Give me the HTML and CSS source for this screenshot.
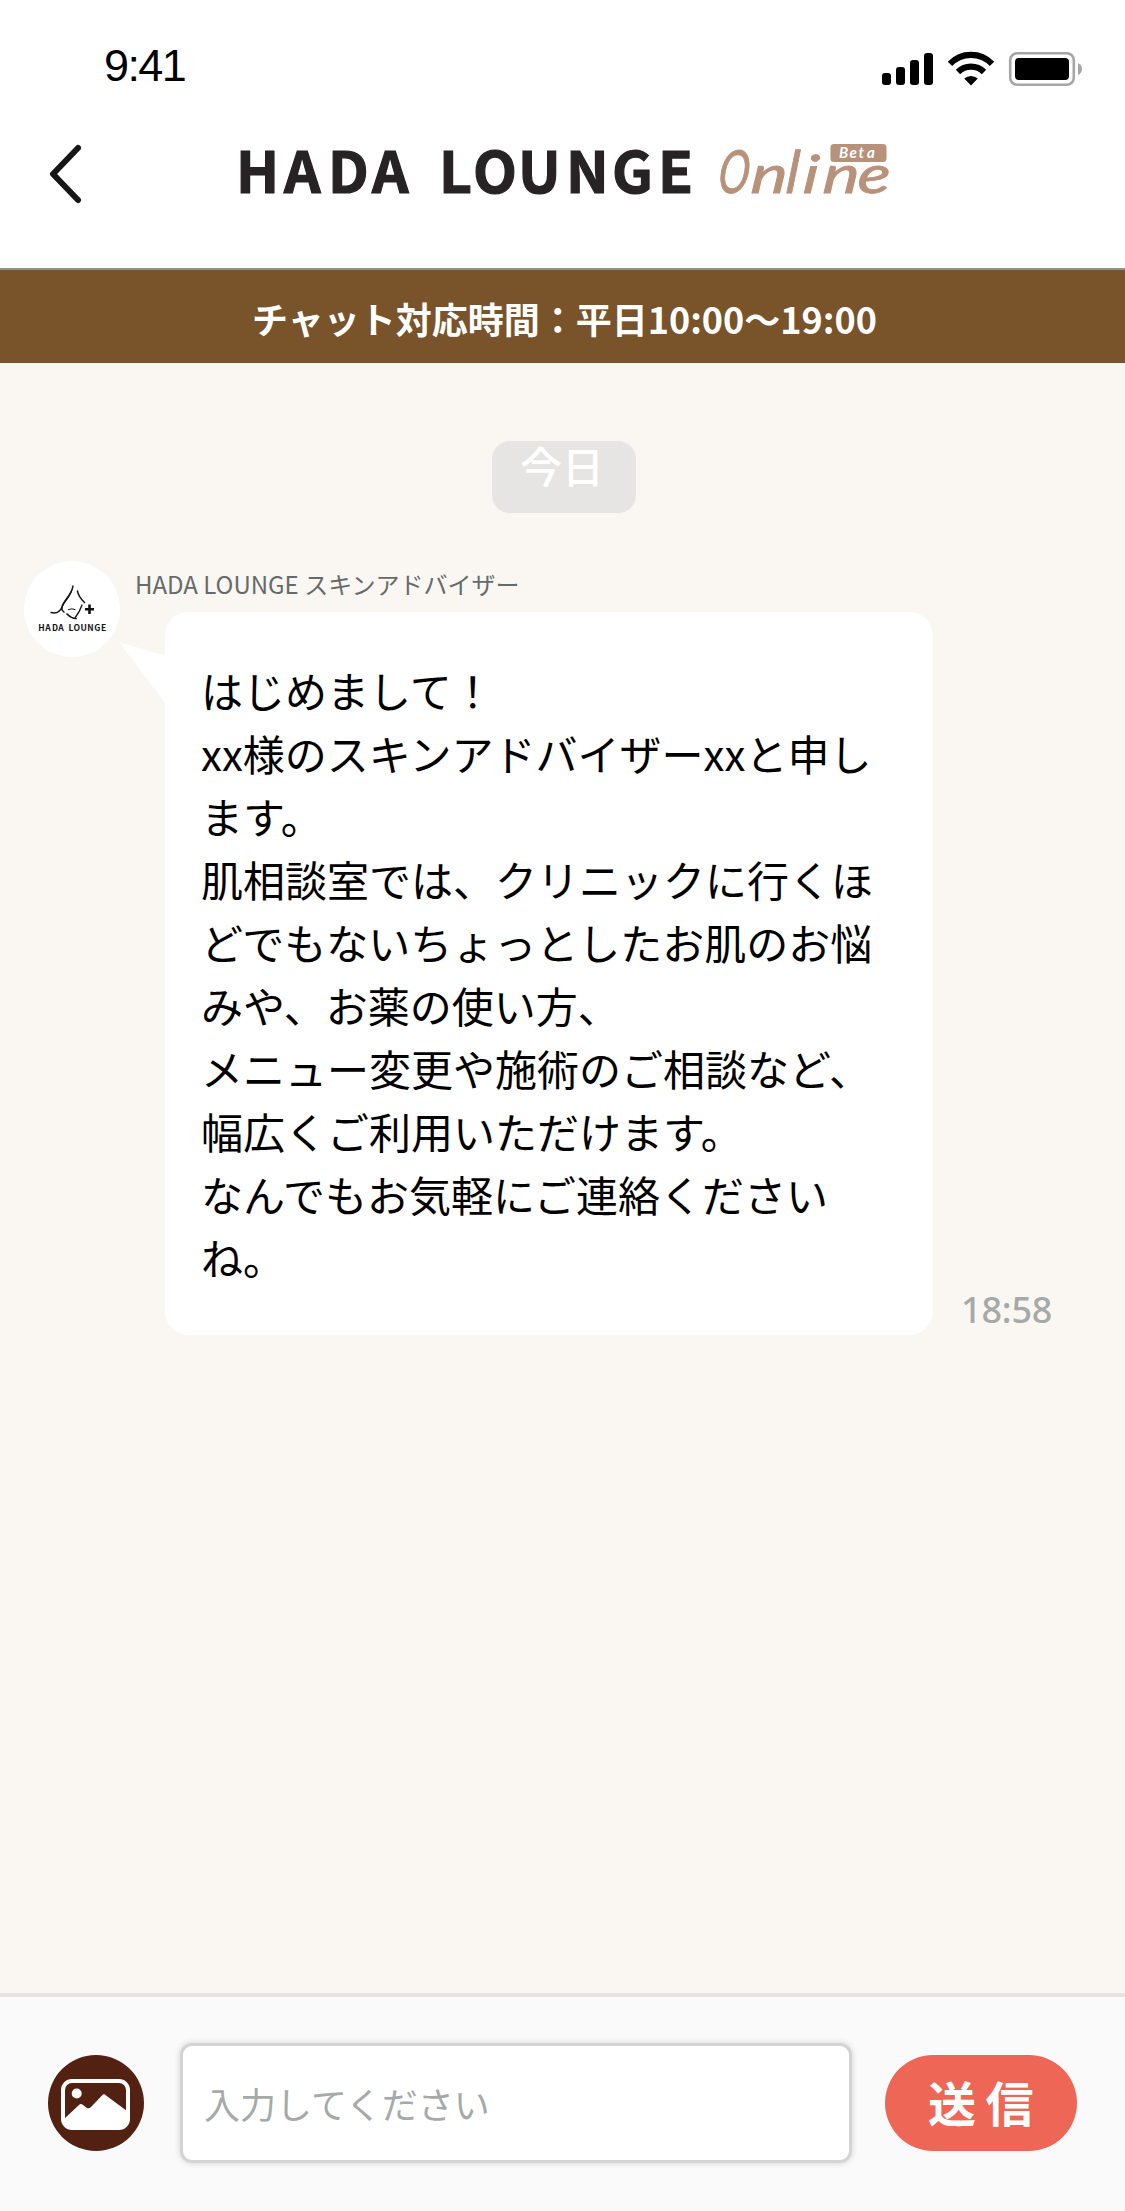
FILE: index.html
```html
<!DOCTYPE html>
<html lang="ja">
<head>
<meta charset="utf-8">
<title>HADA LOUNGE Online</title>
<link rel="stylesheet" href="styles.css">
</head>
<body>
<div class="app">
  <header class="header">
    <div class="status">
      <span class="clock">9:41</span>
      <svg class="status-icons" width="202" height="36" viewBox="0 0 202 36">
        <rect x="2" y="22" width="9" height="12" rx="3"/>
        <rect x="16" y="16" width="9" height="18" rx="3"/>
        <rect x="30" y="9" width="9" height="25" rx="3"/>
        <rect x="44" y="2" width="9" height="32" rx="3"/>
        <g fill="none" stroke="#000" stroke-width="6.2">
          <path d="M70 12.8A29 29 0 0 1 112 12.8"/>
          <path d="M78 21A18.5 18.5 0 0 1 104 21"/>
        </g>
        <path d="M84.2 27.5A10.5 10.5 0 0 1 97.8 27.5L91 34.5Z"/>
        <rect x="130.200" y="2.200" width="63.600" height="31.600" rx="7" fill="none" stroke="#a6a6a6" stroke-width="2.6"/>
        <rect x="135" y="7" width="54" height="22" rx="4"/>
        <path d="M198 12Q202 14 202 18T198 24Z" fill="#a6a6a6"/>
      </svg>
    </div>
    <div class="nav">
      <svg class="back" width="34" height="60" viewBox="0 0 34 60"><path d="M30 4L5 30L30 56" fill="none" stroke="#161617" stroke-width="6" stroke-linecap="round" stroke-linejoin="round"/></svg>
      <svg class="logo" width="660" height="60" viewBox="0 0 660 60">
        <text class="logo-name" y="52.600" x="0 48 92 136 177 203 237 282 330 376 422">HADA LOUNGE</text>
        <g class="logo-online">
          <text transform="translate(481 53) skewX(-6) scale(.74 1.06)">O</text>
          <text transform="translate(514 53) skewX(-5) scale(1.22 .94)">n</text>
          <text transform="translate(549 53) skewX(-5) scale(1 1.05)">l</text>
          <text transform="translate(566 53) skewX(-5) scale(1.2 .94)">i</text>
          <text transform="translate(586 53) skewX(-5) scale(1.22 .94)">n</text>
          <text transform="translate(621 53) skewX(-3) scale(1.22 .94)">e</text>
        </g>
        <rect x="594.500" y="4" width="56" height="18" rx="3.500" fill="#b8917a"/>
        <text class="logo-beta" y="18" x="603 613.500 622.500 631">Beta</text>
      </svg>
    </div>
  </header>
  <div class="banner">チャット対応時間：平日10:00〜19:00</div>
  <main class="chat">
    <div class="date">今日</div>
    <div class="message">
      <div class="avatar">
        <svg width="96" height="96" viewBox="0 0 96 96">
          <g fill="none" stroke="#111" stroke-linecap="round">
            <path d="M49 25C47 36 40 40 38 46C36 51 33 53 27 51.500" stroke-width="1.4"/>
            <path d="M47 31C43 38 39 41 38 46Q37 49 40 51" stroke-width="1.5"/>
            <path d="M53.500 30C54 35 57 38 60.500 41.500" stroke-width="1.5"/>
            <path d="M58 44C56 50 54 53 51 57" stroke-width="1.3"/>
            <path d="M52 57.500C48 57.500 45 55 43 53" stroke-width="1.7"/>
            <path d="M44.500 48.500Q48 47 51 48.500" stroke-width="1"/>
          </g>
          <path d="M65.500 43.500V53M61 48.200H70" stroke="#111" stroke-width="2.600"/>
          <text class="avatar-name" y="70.300" x="14.200 21.200 28 34.200 41 44.500 49.600 56.400 63.200 70.200 77">HADA LOUNGE</text>
        </svg>
      </div>
      <div class="body">
        <div class="name">HADA LOUNGE スキンアドバイザー</div>
        <div class="row">
          <div class="bubble">
            <svg class="tail" width="47" height="62" viewBox="0 0 47 62"><path d="M0 0L47 14V62Z" fill="#fff"/></svg>
            はじめまして！<br>xx様のスキンアドバイザーxxと申します。<br>肌相談室では、クリニックに行くほどでもないちょっとしたお肌のお悩みや、お薬の使い方、<br>メニュー変更や施術のご相談など、幅広くご利用いただけます。<br>なんでもお気軽にご連絡くださいね。
          </div>
          <time class="time">18:58</time>
        </div>
      </div>
    </div>
  </main>
  <footer class="composer">
    <button class="photo" aria-label="画像">
      <svg width="96" height="96" viewBox="0 0 96 96">
        <rect x="15" y="26" width="65" height="47" rx="9" fill="none" stroke="#fff" stroke-width="4"/>
        <circle cx="28.700" cy="38.500" r="5" fill="#fff"/>
        <path d="M16 64L31 50Q33 48 35 50L39 53Q41 54 43 52L54 40.500Q56 38 58 40.500L79 56V64Q79 73 71 73H24Q16 73 16 65Z" fill="#fff"/>
      </svg>
    </button>
    <input class="field" type="text" placeholder="入力してください">
    <button class="send">送信</button>
  </footer>
</div>
</body>
</html>
```
FILE: styles.css
```css
* { box-sizing: border-box; }
body { margin: 0; font-family: "Noto Sans CJK JP", sans-serif; color: #000; }
.app { width: 1125px; height: 2211px; display: flex; flex-direction: column; background: #faf7f2; }
.header { height: 270px; background: #fff; border-bottom: 2px solid #8f8f8f; }
.status { height: 132px; padding: 42px 43px 0 104px; display: flex; justify-content: space-between; align-items: flex-start; }
.clock { font: 45px/48px "Liberation Sans", Arial, sans-serif; letter-spacing: -1.6px; }
.status-icons { margin-top: 9px; }
.nav { display: flex; padding: 8px 0 0 48px; }
.back { margin-top: 4px; }
.logo { margin-left: 154px; overflow: visible; }
.logo-name { font: bold 57px "Noto Sans CJK JP", sans-serif; fill: #272324; stroke: #272324; stroke-width: 1.2px; }
.logo-online { font: italic 56px Lato, sans-serif; fill: #b8917a; stroke: #b8917a; stroke-width: .9px; }
.logo-beta { font: italic bold 15px Lato, sans-serif; fill: #fff; }
.banner { height: 93px; padding-left: 4px; background: #795329; color: #fff; font-size: 36px; font-weight: 700; line-height: 97px; text-align: center; }
.chat { flex: 1; padding-top: 78px; }
.date { width: 144px; height: 72px; margin: 0 auto; position: relative; left: 1px; border-radius: 18px; background: #e6e5e3; color: #fff; font-size: 42px; font-weight: 500; line-height: 48px; text-align: center; padding-right: 3px; }
.message { display: flex; padding: 48px 0 0 24px; }
.avatar { flex: none; width: 96px; height: 96px; border-radius: 50%; background: #fff; }
.avatar svg { display: block; }
.avatar-name { font: bold 8.500px "Noto Sans CJK JP", sans-serif; fill: #111; }
.body { padding-left: 15px; }
.name { height: 51px; font-size: 24px; line-height: 46px; color: #656b6a; }
.row { display: flex; align-items: flex-end; gap: 28px; margin-left: 30px; }
.bubble { position: relative; width: 768px; height: 723px; padding: 46px 48px 0 36px; border-radius: 24px; background: #fff; font-size: 42px; line-height: 63px; }
.tail { position: absolute; left: -46px; top: 30px; }
.time { font: 500 36px/51px "Noto Sans", sans-serif; letter-spacing: -.2px; color: #a5aaa9; }
.composer { height: 218px; border-top: 4px solid #e4e4e4; background: #fafafa; display: flex; align-items: flex-start; padding: 46px 48px 0; }
.photo, .send { border: 0; padding: 0; height: 96px; margin-top: 12px; border-radius: 48px; }
.photo { width: 96px; background: #522111; }
.photo svg { display: block; }
.field { width: 672px; height: 120px; margin: 0 33px 0 36px; padding: 0 21px 1px; border: 3px solid #d4d4d4; border-radius: 12px; background: #fff; box-shadow: 0 0 6px rgba(0,0,0,.16); font: 36px "Noto Sans CJK JP", sans-serif; }
.field::placeholder { color: #a5aaa9; opacity: 1; }
.send { width: 192px; background: #ee6756; color: #fff; font: bold 48px/92px "Noto Sans CJK JP", sans-serif; letter-spacing: 9.6px; padding: 0 0 4px 9px; }
```
